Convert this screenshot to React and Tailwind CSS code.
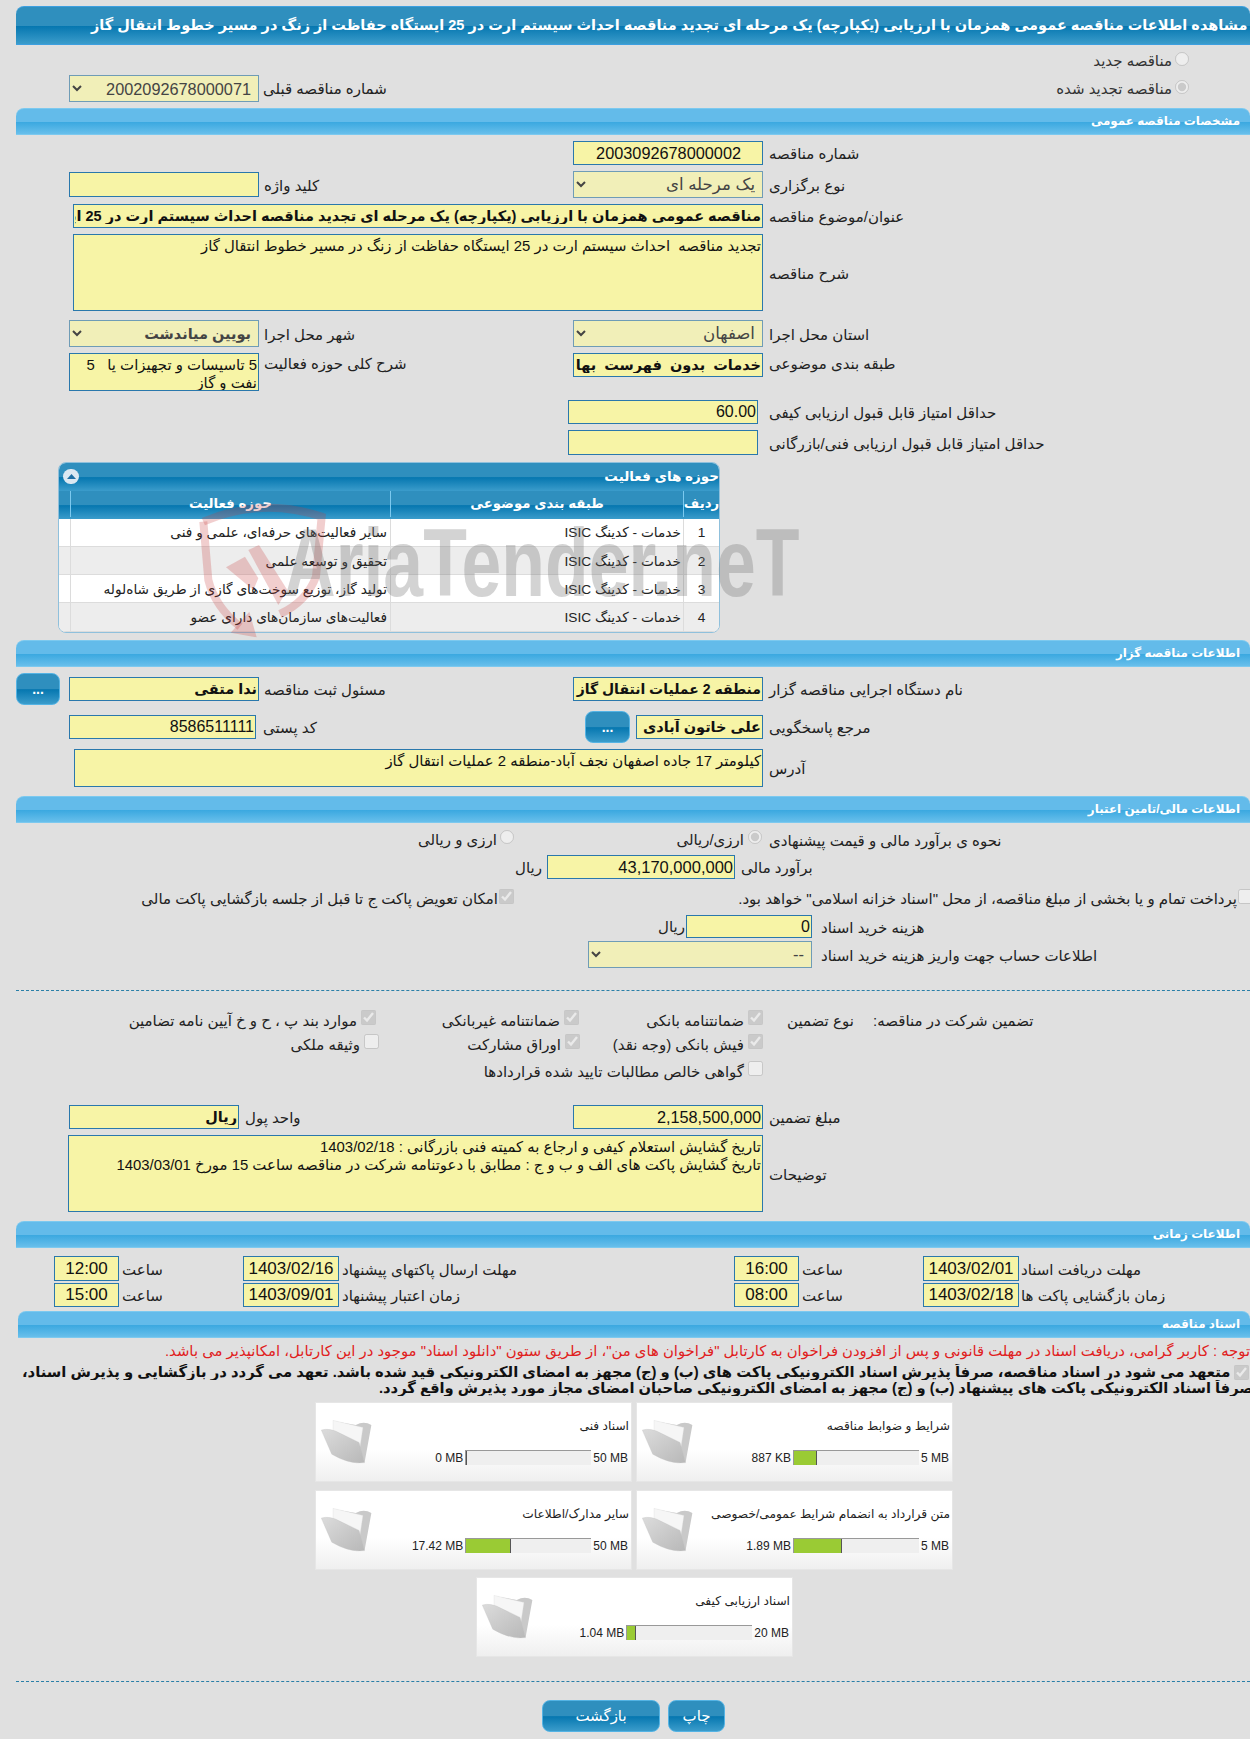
import React from "react";

const font = "font-['Liberation_Sans','DejaVu_Sans',sans-serif]";
const barDark = "bg-[linear-gradient(#2f8fbe_0%,#2f8fbe_50%,#0677b0_52%,#3b9ccb_100%)]";
const barLight = "bg-[linear-gradient(#63bbea_0%,#63bbea_50%,#3aa8e0_52%,#68bfeb_100%)]";
const inputBase = "block bg-[#f7f4a6] border border-[#2a78ac] text-[#111] px-[1px] outline-none shrink-0 overflow-hidden resize-none";

function Lbl({ cls = "", pad = "pt-[2px]", children }) {
  return <div className={"text-left whitespace-nowrap text-[15px] leading-[18px] text-[#222] shrink-0 " + pad + " " + cls}>{children}</div>;
}
function Section({ title, cls = "ml-[16px]" }) {
  return (
    <div className={"h-[27px] flex items-center pr-[10px] rounded-t-[8px] border-y border-[#7cc9ef] text-white font-bold text-[11.9px] " + barLight + " " + cls}>
      <span>{title}</span>
    </div>
  );
}
function Inp({ value = "", cls = "", text = "text-[16px]" }) {
  return <input readOnly value={value} dir="rtl" className={inputBase + " " + text + " " + cls} />;
}
function Area({ value = "", cls = "", text = "text-[14.9px] leading-[18px]" }) {
  return <textarea readOnly value={value} dir="rtl" className={inputBase + " pt-[2px] " + text + " " + cls} />;
}
function Sel({ value, cls = "", text = "text-[16.6px]" }) {
  return (
    <select disabled dir="rtl" value={value} className={"block bg-[#f1efb8] border border-[#6f9cb6] text-[#444] shrink-0 pr-[3px] opacity-100 " + text + " " + cls}>
      <option value={value}>{value}</option>
    </select>
  );
}
function Radio({ checked = false, cls = "" }) {
  return <input type="radio" disabled checked={checked} readOnly className={"w-[14px] h-[14px] shrink-0 " + cls} />;
}
function Check({ checked = false, cls = "" }) {
  return <input type="checkbox" disabled checked={checked} readOnly className={"w-[15px] h-[15px] shrink-0 " + cls} />;
}
function CheckCell({ checked, label, cls = "" }) {
  return (
    <div className={"flex items-start shrink-0 " + cls}>
      <Check checked={checked} />
      <span className="whitespace-nowrap text-[15px] leading-[22px] text-[#222] mr-[4px]">{label}</span>
    </div>
  );
}
function Btn({ children, cls = "" }) {
  return (
    <div className={"flex items-center justify-center rounded-[8px] border border-[#54b3e4] text-white shrink-0 " + barDark + " " + cls}>
      {children}
    </div>
  );
}
function Folder() {
  return (
    <svg width="52" height="48" viewBox="33 53 160 145" className="shrink-0 blur-[0.5px]">
      <defs>
        <linearGradient id="fld" x1="0" y1="0" x2="1" y2="1">
          <stop offset="0" stopColor="#dcdcdc" />
          <stop offset="1" stopColor="#b8b8b8" />
        </linearGradient>
      </defs>
      <path d="M75 65 L140 76 Q165 62 188 76 L167 192 L140 130 Z" fill="#c9c9c9" />
      <path d="M70 62 L162 84 L152 150 L70 100 Z" fill="#f6f6f6" stroke="#dddddd" />
      <path d="M34 92 Q60 84 92 102 L150 130 L167 192 Q120 198 66 166 Z" fill="url(#fld)" stroke="#c2c2c2" />
    </svg>
  );
}
function Card({ title, max, used, fill, cls = "" }) {
  return (
    <div className={"w-[317px] h-[80px] shrink-0 flex border border-[#e6e6e6] bg-[linear-gradient(#ffffff_0%,#ffffff_60%,#efefef_100%)] " + cls}>
      <div className="flex-1 min-w-0">
        <div className="mt-[14px] h-[18px] pr-[2px] text-[12.2px] leading-[18px] text-[#222] whitespace-nowrap">{title}</div>
        <div className="mt-[15px] flex items-center h-[15px] pr-[3px] text-[12px] text-[#222]">
          <span dir="ltr" className="whitespace-nowrap">{max}</span>
          <div dir="ltr" className="w-[126px] h-[15px] mx-[2px] flex bg-[#efefef] border-t border-l border-[#999999] shrink-0">
            <div className="h-full bg-[#9acb34] border-r border-[#555555]" style={{ width: fill }} />
          </div>
          <span dir="ltr" className="whitespace-nowrap">{used}</span>
        </div>
      </div>
      <div className="ml-[5px] mt-[14px]"><Folder /></div>
    </div>
  );
}
function TRow({ n, cat, act, even }) {
  return (
    <div className={"grid grid-cols-[36px_293px_320px_11px] h-[28.25px] border-b border-[#dcdcdc] text-[13.7px] text-[#222] " + (even ? "bg-[#ededed]" : "bg-white")}>
      <div className="flex items-center justify-center pt-[3px] border-l border-[#dcdcdc]">{n}</div>
      <div className="flex items-center pr-[2px] pt-[3px] border-l border-[#dcdcdc] whitespace-nowrap">{cat}</div>
      <div className="flex items-center pr-[3px] pt-[3px] border-l border-[#dcdcdc] whitespace-nowrap">{act}</div>
      <div />
    </div>
  );
}

export default function App() {
  return (
    <div dir="rtl" className={"relative w-[1250px] h-[1739px] overflow-hidden bg-[#e0e0e0] pt-[6px] " + font}>
      {/* title */}
      <div className={"ml-[16px] h-[39px] rounded-t-[8px] border-y border-[#3d9fe0] flex justify-end items-center pl-[75px] overflow-hidden " + barDark}>
        <span className="whitespace-nowrap text-white font-bold text-[14.5px] shrink-0">
          مشاهده اطلاعات مناقصه عمومی همزمان با ارزیابی (یکپارچه) یک مرحله ای تجدید مناقصه احداث سیستم ارت در 25 ایستگاه حفاظت از زنگ در مسیر خطوط انتقال گاز
        </span>
      </div>

      <div className="mt-[7px] h-[23px] flex items-start pr-[61px]">
        <Radio />
        <span className="mr-[3px] text-[15px] leading-[18px] text-[#333]">مناقصه جدید</span>
      </div>
      <div className="h-[27px] flex items-start">
        <div className="w-[61px] shrink-0" />
        <div className="w-[926px] shrink-0 flex items-start pt-[5px]">
          <Radio checked />
          <span className="mr-[3px] text-[15px] leading-[18px] text-[#333]">مناقصه تجدید شده</span>
        </div>
        <Lbl pad="" cls="w-[4px] pl-[4px] self-center flex justify-end">شماره مناقصه قبلی</Lbl>
        <Sel value="2002092678000071" cls="w-[190px] h-[27px]" text="text-[16.3px]" />
      </div>

      <Section title="مشخصات مناقصه عمومی" cls="ml-[16px] mt-[6px]" />

      <div className="mt-[6px] h-[24px] flex items-center">
        <Lbl cls="w-[487px] pl-[6px]">شماره مناقصه</Lbl>
        <Inp value="2003092678000002" cls="w-[190px] h-[24px] pr-[21px]" text="text-[16.3px]" />
      </div>
      <div className="mt-[6px] h-[27px] flex items-center">
        <Lbl cls="w-[487px] pl-[6px]">نوع برگزاری</Lbl>
        <Sel value="یک مرحله ای" cls="w-[190px] h-[27px]" />
        <Lbl cls="w-[314px] pl-[5px]">کلید واژه</Lbl>
        <Inp cls="w-[190px] h-[25px]" />
      </div>
      <div className="mt-[6px] h-[24px] flex items-center">
        <Lbl cls="w-[487px] pl-[6px]">عنوان/موضوع مناقصه</Lbl>
        <Inp value="مناقصه عمومی همزمان با ارزیابی (یکپارچه) یک مرحله ای تجدید مناقصه احداث سیستم ارت در 25 ایستگاه حفاظت از زنگ در مسیر خطوط انتقال گاز" cls="w-[690px] h-[24px] font-bold" text="text-[14.5px]" />
      </div>
      <div className="mt-[6px] h-[77px] flex items-center">
        <Lbl cls="w-[487px] pl-[6px]">شرح مناقصه</Lbl>
        <Area value="تجدید مناقصه  احداث سیستم ارت در 25 ایستگاه حفاظت از زنگ در مسیر خطوط انتقال گاز" cls="w-[690px] h-[77px]" />
      </div>
      <div className="mt-[9px] h-[27px] flex items-center">
        <Lbl cls="w-[487px] pl-[6px]">استان محل اجرا</Lbl>
        <Sel value="اصفهان" cls="w-[190px] h-[27px]" />
        <Lbl cls="w-[314px] pl-[5px]">شهر محل اجرا</Lbl>
        <Sel value="بویین میاندشت" cls="w-[190px] h-[27px] font-bold" text="text-[14.5px]" />
      </div>
      <div className="mt-[6px] h-[38px] flex items-start">
        <Lbl cls="w-[487px] pl-[6px]">طبقه بندی موضوعی</Lbl>
        <Inp value="خدمات بدون فهرست بها" cls="w-[190px] h-[24px] font-bold [word-spacing:4px]" text="text-[14.5px]" />
        <Lbl cls="w-[314px] pl-[5px]">شرح کلی حوزه فعالیت</Lbl>
        <Area value={"5 تاسیسات و تجهیزات یا   5\nنفت و گاز"} cls="w-[190px] h-[38px]" />
      </div>
      <div className="mt-[9px] h-[24px] flex items-center">
        <Lbl cls="w-[487px] pl-[6px]">حداقل امتیاز قابل قبول ارزیابی کیفی</Lbl>
        <Inp value="60.00" cls="w-[190px] h-[24px] mr-[5px]" />
      </div>
      <div className="mt-[6px] h-[25px] flex items-center">
        <Lbl cls="w-[487px] pl-[6px]">حداقل امتیاز قابل قبول ارزیابی فنی/بازرگانی</Lbl>
        <Inp cls="w-[190px] h-[25px] mr-[5px]" />
      </div>

      {/* activity panel */}
      <div className="mt-[7px] mr-[530px] w-[662px] h-[171px] rounded-[8px] overflow-hidden border border-[#8fc0dc] bg-white">
        <div className={"h-[27.5px] flex items-center justify-between " + barDark}>
          <span className="text-white font-bold text-[13.5px] whitespace-nowrap">حوزه های فعالیت</span>
          <span className="ml-[4px] w-[16px] h-[15px] rounded-full bg-[#dce8f2] flex items-center justify-center">
            <svg width="9" height="5" viewBox="0 0 9 5"><path d="M0 5 L4.5 0 L9 5 Z" fill="#1f6fa5" /></svg>
          </span>
        </div>
        <div className={"grid grid-cols-[36px_293px_320px_11px] h-[28px] text-white font-bold text-[13.3px] pb-[2px] " + barDark}>
          <div className="flex items-center justify-center border-l border-[#7cc9ef]">ردیف</div>
          <div className="flex items-center justify-center border-l border-[#7cc9ef]">طبقه بندی موضوعی</div>
          <div className="flex items-center justify-center border-l border-[#7cc9ef]">حوزه فعالیت</div>
          <div />
        </div>
        <TRow n="1" cat="خدمات - کدینگ ISIC" act="سایر فعالیت‌های حرفه‌ای، علمی و فنی" />
        <TRow n="2" cat="خدمات - کدینگ ISIC" act="تحقیق و توسعه علمی" even />
        <TRow n="3" cat="خدمات - کدینگ ISIC" act="تولید گاز، توزیع سوخت‌های گازی از طریق شاه‌لوله" />
        <TRow n="4" cat="خدمات - کدینگ ISIC" act="فعالیت‌های سازمان‌های دارای عضو" even />
      </div>

      <Section title="اطلاعات مناقصه گزار" cls="ml-[16px] mt-[7px]" />

      <div className="mt-[6px] h-[32px] flex items-center">
        <Lbl cls="w-[487px] pl-[6px]">نام دستگاه اجرایی مناقصه گزار</Lbl>
        <Inp value="منطقه 2 عملیات انتقال گاز" cls="w-[190px] h-[24px] font-bold" text="text-[14px]" />
        <Lbl cls="w-[314px] pl-[5px]">مسئول ثبت مناقصه</Lbl>
        <Inp value="ندا متقی" cls="w-[190px] h-[24px] font-bold" text="text-[14.5px]" />
        <Btn cls="w-[44px] h-[32px] mr-[9px] font-bold text-[14px]">...</Btn>
      </div>
      <div className="mt-[6px] h-[32px] flex items-center">
        <Lbl cls="w-[487px] pl-[6px]">مرجع پاسخگویی</Lbl>
        <Inp value="علی خاتون آبادی" cls="w-[127px] h-[24px] font-bold" text="text-[14.5px]" />
        <Btn cls="w-[45px] h-[32px] mr-[6px] font-bold text-[14px]">...</Btn>
        <Lbl cls="w-[329px] pl-[7px]">کد پستی</Lbl>
        <Inp value="8586511111" cls="w-[187px] h-[24px]" />
      </div>
      <div className="mt-[6px] h-[38px] flex items-center">
        <Lbl cls="w-[487px] pl-[6px]">آدرس</Lbl>
        <Area value="کیلومتر 17 جاده اصفهان نجف آباد-منطقه 2 عملیات انتقال گاز" cls="w-[689px] h-[38px]" />
      </div>

      <Section title="اطلاعات مالی/تامین اعتبار" cls="ml-[16px] mt-[9px]" />

      <div className="mt-[7px] h-[22px] flex items-start">
        <Lbl cls="w-[487px] pl-[6px]">نحوه ی برآورد مالی و قیمت پیشنهادی</Lbl>
        <div className="w-[249px] shrink-0 flex items-start">
          <Radio checked cls="mr-[1px]" />
          <span className="mr-[4px] mt-[1px] text-[15px] leading-[18px] text-[#222]">ارزی/ریالی</span>
        </div>
        <Radio />
        <span className="mr-[3px] mt-[1px] text-[15px] leading-[18px] text-[#222]">ارزی و ریالی</span>
      </div>
      <div className="mt-[3px] h-[24px] flex items-center">
        <Lbl cls="w-[515px] pl-[6px]">برآورد مالی</Lbl>
        <Inp value="43,170,000,000" cls="w-[188px] h-[24px]" text="text-[16.5px]" />
        <span className="mr-[5px] pt-[2px] text-[15px] text-[#222]">ریال</span>
      </div>
      <div className="mt-[10px] h-[18px] flex items-start">
        <div className="w-[736px] shrink-0 flex items-start -mr-[3px]">
          <Check />
          <span className="mr-[1px] mt-[1px] text-[15px] leading-[18px] text-[#222] whitespace-nowrap">پرداخت تمام و یا بخشی از مبلغ مناقصه، از محل "اسناد خزانه اسلامی" خواهد بود.</span>
        </div>
        <Check checked cls="mr-[3px]" />
        <span className="mr-[1px] mt-[1px] text-[15px] leading-[18px] text-[#222] whitespace-nowrap">امکان تعویض پاکت ج تا قبل از جلسه بازگشایی پاکت مالی</span>
      </div>
      <div className="mt-[8px] h-[23px] flex items-center">
        <Lbl cls="w-[438px] pl-[9px]">هزینه خرید اسناد</Lbl>
        <Inp value="0" cls="w-[126px] h-[23px]" />
        <span className="mr-[1px] pt-[2px] text-[15px] text-[#222]">ریال</span>
      </div>
      <div className="mt-[3px] h-[27px] flex items-center">
        <Lbl cls="w-[438px] pl-[9px]">اطلاعات حساب جهت واریز هزینه خرید اسناد</Lbl>
        <Sel value="--" cls="w-[224px] h-[27px]" />
      </div>

      <div className="mt-[22px] ml-[16px] border-t border-dashed border-[#2a7fa8]" />

      <div className="mt-[19px] h-[22px] flex items-start">
        <Lbl pad="" cls="w-[377px] leading-[22px]">تضمین شرکت در مناقصه:</Lbl>
        <Lbl pad="" cls="w-[110px] pl-[24px] leading-[22px]">نوع تضمین</Lbl>
        <CheckCell checked label="ضمانتنامه بانکی" cls="w-[184px]" />
        <CheckCell checked label="ضمانتنامه غیربانکی" cls="w-[203px]" />
        <CheckCell checked label="موارد بند پ ، ح و خ آیین نامه تضامین" />
      </div>
      <div className="mt-[2px] h-[22px] flex items-start">
        <div className="w-[487px] shrink-0" />
        <CheckCell checked label="فیش بانکی (وجه نقد)" cls="w-[183px]" />
        <CheckCell checked label="اوراق مشارکت" cls="w-[201px]" />
        <CheckCell label="وثیقه ملکی" />
      </div>
      <div className="mt-[5px] h-[22px] flex items-start">
        <div className="w-[487px] shrink-0" />
        <CheckCell label="گواهی خالص مطالبات تایید شده قراردادها" />
      </div>

      <div className="mt-[22px] h-[24px] flex items-center">
        <Lbl cls="w-[487px] pl-[6px]">مبلغ تضمین</Lbl>
        <Inp value="2,158,500,000" cls="w-[190px] h-[24px]" text="text-[16.3px]" />
        <Lbl cls="w-[334px] pl-[6px]">واحد پول</Lbl>
        <Inp value="ریال" cls="w-[170px] h-[24px] font-bold" text="text-[14.5px]" />
      </div>
      <div className="mt-[6px] h-[77px] flex items-center">
        <Lbl cls="w-[487px] pl-[6px]">توضیحات</Lbl>
        <Area value={"تاریخ گشایش استعلام کیفی و ارجاع به کمیته فنی بازرگانی : 1403/02/18\nتاریخ گشایش پاکت های الف و ب و ج : مطابق با دعوتنامه شرکت در مناقصه ساعت 15 مورخ 1403/03/01"} cls="w-[695px] h-[77px]" />
      </div>

      <Section title="اطلاعات زمانی" cls="ml-[16px] mt-[9px]" />

      <div className="mt-[8px] h-[25px] flex items-center">
        <Lbl cls="w-[231px] pl-[2px]">مهلت دریافت اسناد</Lbl>
        <Inp value="1403/02/01" cls="w-[96px] h-[25px] text-center" text="text-[17px]" />
        <Lbl cls="w-[124px] pl-[3px]">ساعت</Lbl>
        <Inp value="16:00" cls="w-[65px] h-[25px] text-center" text="text-[17px]" />
        <Lbl cls="w-[395px] pl-[3px]">مهلت ارسال پاکتهای پیشنهاد</Lbl>
        <Inp value="1403/02/16" cls="w-[96px] h-[25px] text-center" text="text-[17px]" />
        <Lbl cls="w-[124px] pl-[3px]">ساعت</Lbl>
        <Inp value="12:00" cls="w-[65px] h-[25px] text-center" text="text-[17px]" />
      </div>
      <div className="mt-[2px] h-[24px] flex items-center">
        <Lbl cls="w-[231px] pl-[2px]">زمان بازگشایی پاکت ها</Lbl>
        <Inp value="1403/02/18" cls="w-[96px] h-[24px] text-center" text="text-[17px]" />
        <Lbl cls="w-[124px] pl-[3px]">ساعت</Lbl>
        <Inp value="08:00" cls="w-[65px] h-[24px] text-center" text="text-[17px]" />
        <Lbl cls="w-[395px] pl-[3px]">زمان اعتبار پیشنهاد</Lbl>
        <Inp value="1403/09/01" cls="w-[96px] h-[24px] text-center" text="text-[17px]" />
        <Lbl cls="w-[124px] pl-[3px]">ساعت</Lbl>
        <Inp value="15:00" cls="w-[65px] h-[24px] text-center" text="text-[17px]" />
      </div>

      <Section title="اسناد مناقصه" cls="ml-[18px] mt-[4px]" />

      <div className="mt-[4px] h-[18px] flex justify-end pl-[165px] overflow-hidden">
        <span className="shrink-0 whitespace-nowrap text-[14.85px] leading-[18px] text-[#e02020]">
          توجه : کاربر گرامی، دریافت اسناد در مهلت قانونی و پس از افزودن فراخوان به کارتابل "فراخوان های من"، از طریق ستون "دانلود اسناد" موجود در این کارتابل، امکانپذیر می باشد.
        </span>
      </div>
      <div className="mt-[4px] h-[16px] flex items-center justify-end pl-[22px] overflow-hidden">
        <div className="shrink-0 flex items-center whitespace-nowrap text-[14.8px] font-bold leading-[16px] text-[#111]">
          <Check checked cls="ml-[4px]" />
          <span>متعهد می شود در اسناد مناقصه، صرفاً پذیرش اسناد الکترونیکی پاکت های (ب) و (ج) مجهز به امضای الکترونیکی قید شده باشد. تعهد می گردد در بازگشایی و پذیرش اسناد،</span>
        </div>
      </div>
      <div className="h-[16px] flex items-center justify-end pl-[379px] overflow-hidden">
        <span className="shrink-0 whitespace-nowrap text-[14.7px] font-bold leading-[16px] text-[#111]">
          صرفاً اسناد الکترونیکی پاکت های پیشنهاد (ب) و (ج) مجهز به امضای الکترونیکی صاحبان امضای مجاز مورد پذیرش واقع گردد.
        </span>
      </div>

      <div className="mt-[6px] flex gap-[4px] mr-[297px]">
        <Card title="شرایط و ضوابط مناقصه" max="5 MB" used="887 KB" fill="23px" />
        <Card title="اسناد فنی" max="50 MB" used="0 MB" fill="0px" />
      </div>
      <div className="mt-[8px] flex gap-[4px] mr-[297px]">
        <Card title="متن قرارداد به انضمام شرایط عمومی/خصوصی" max="5 MB" used="1.89 MB" fill="48px" />
        <Card title="سایر مدارک/اطلاعات" max="50 MB" used="17.42 MB" fill="45px" />
      </div>
      <div className="mt-[7px] flex mr-[457px]">
        <Card title="اسناد ارزیابی کیفی" max="20 MB" used="1.04 MB" fill="9px" />
      </div>

      <div className="mt-[24px] ml-[16px] border-t border-dashed border-[#2a7fa8]" />

      <div className="mt-[18px] flex gap-[8px] mr-[525px]">
        <Btn cls="w-[57px] h-[32px] text-[15px]">چاپ</Btn>
        <Btn cls="w-[118px] h-[32px] text-[15px]">بازگشت</Btn>
      </div>

      {/* watermark */}
      <svg width="300" height="160" viewBox="0 0 900 480" className="absolute left-[190px] top-[490px] pointer-events-none">
        <g fill="none" stroke="#c83c3c" strokeOpacity="0.25" strokeWidth="24">
          <path d="M40 95 Q215 20 395 80 L378 260 Q350 335 270 372" />
          <path d="M40 95 L55 270 Q75 350 150 410" />
        </g>
        <g fill="#c83c3c" fillOpacity="0.25">
          <path d="M108 232 L165 200 L205 265 L190 300 Z" />
          <path d="M175 180 L207 165 L292 300 L265 345 Z" />
          <path d="M122 428 L200 442 L178 365 Z" />
        </g>
      </svg>
      <div dir="ltr" className="absolute left-[284px] top-[513px] origin-left scale-x-[0.745] text-[96px] leading-[100px] font-bold text-[#6e6e6e]/30 whitespace-nowrap pointer-events-none font-['Liberation_Sans',sans-serif]">
        AriaTender.neT
      </div>
    </div>
  );
}
